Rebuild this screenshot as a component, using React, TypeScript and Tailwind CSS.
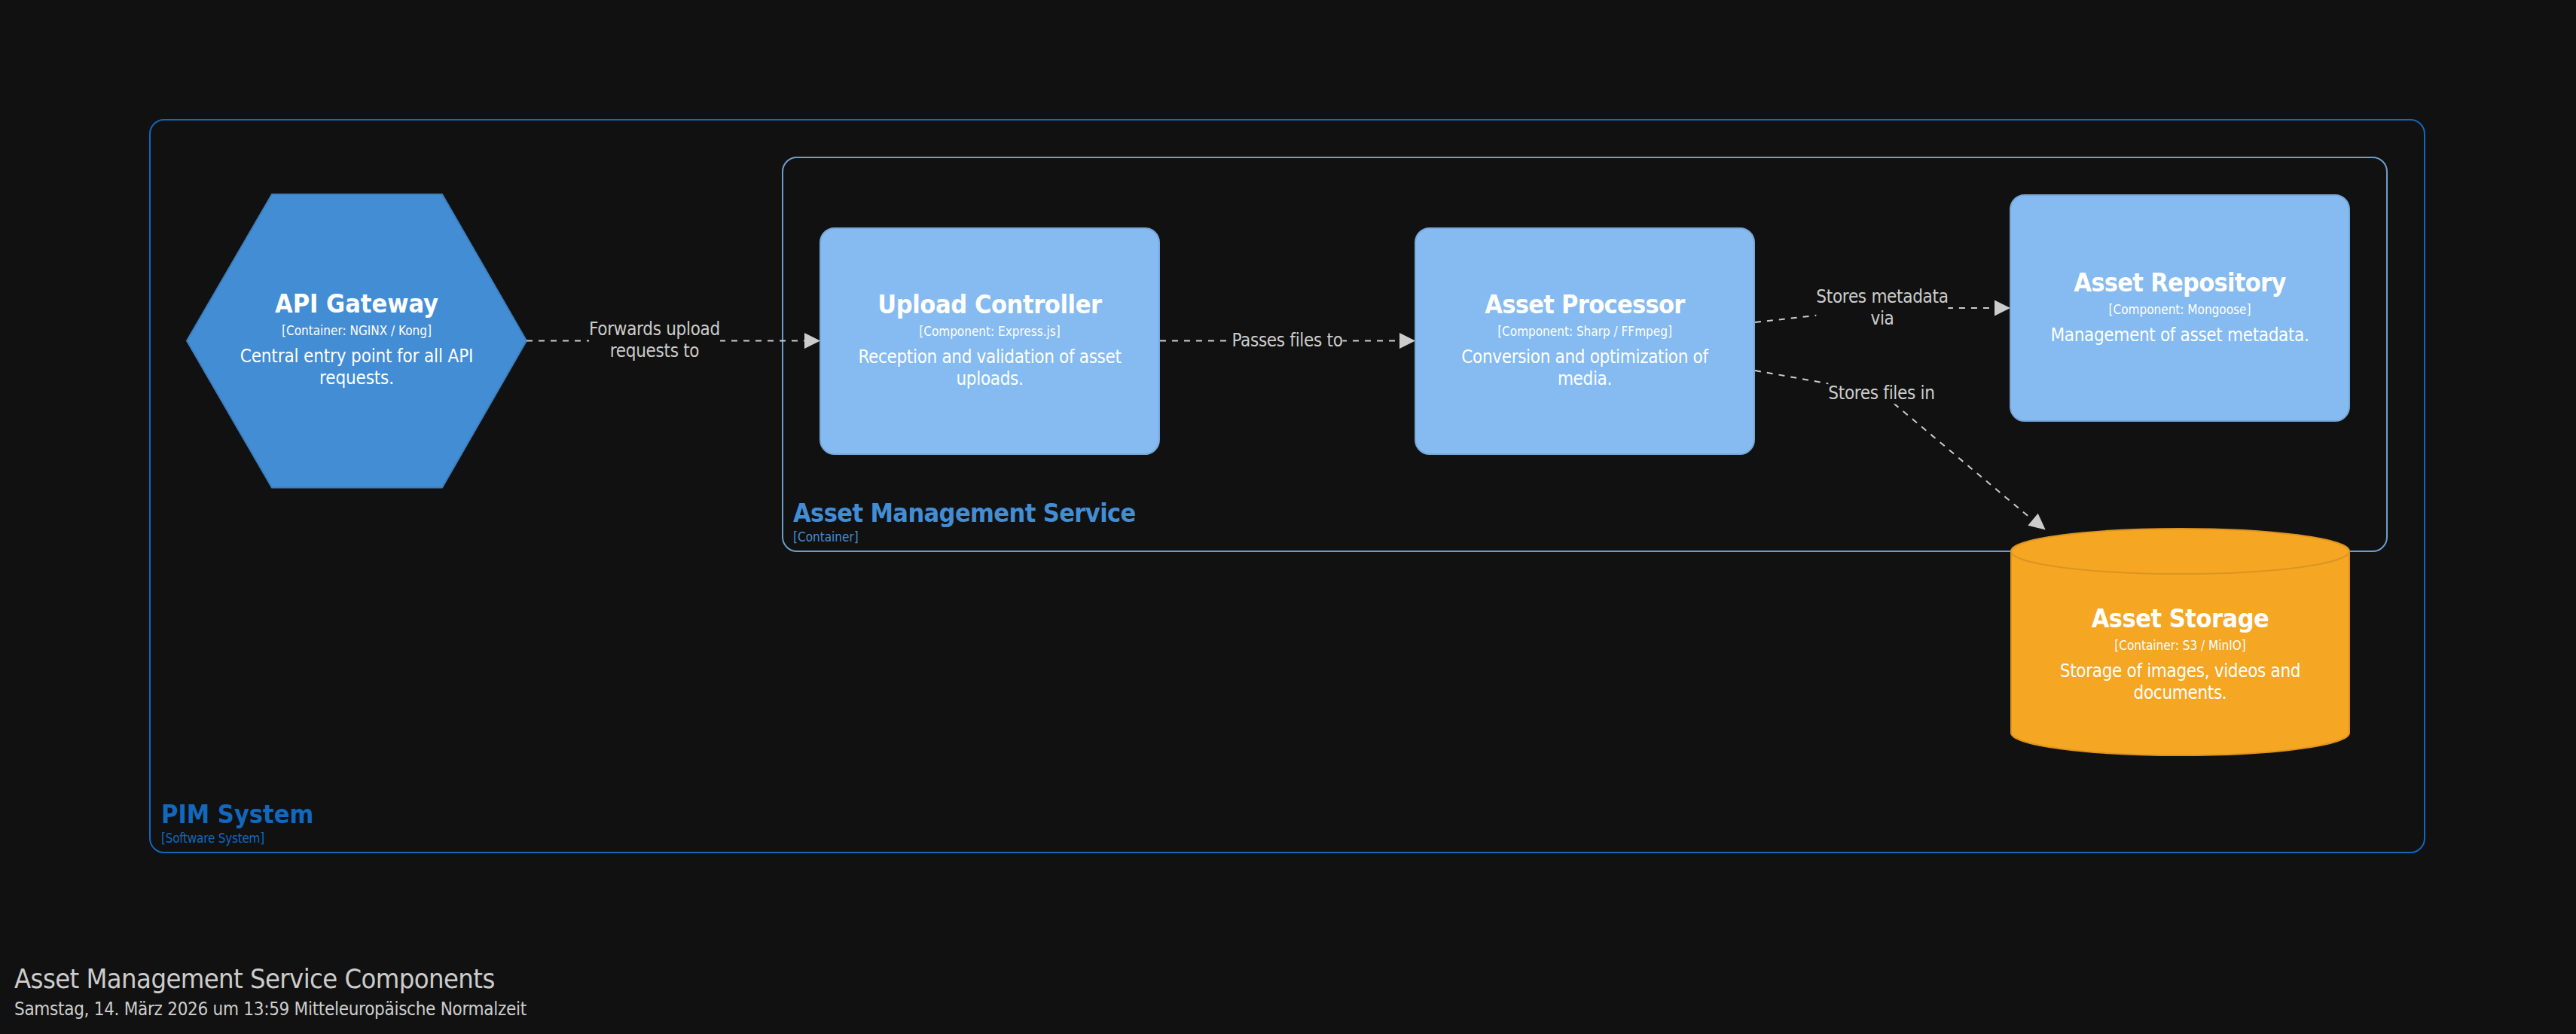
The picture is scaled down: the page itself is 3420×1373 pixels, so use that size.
const FONT = "font-['DejaVu_Sans_Condensed','DejaVu_Sans',sans-serif] [font-stretch:condensed]";

type NodeProps = { name: string; meta: string; desc: string[]; nameTrack?: string; descTrack?: string };

function NodeText({ name, meta, desc, nameTrack = "tracking-[-0.6px]", descTrack = "tracking-[-0.33px]" }: NodeProps) {
  return (
    <div className="flex flex-col items-center text-center text-white">
      <div className={`text-[34px] leading-[40px] font-bold whitespace-nowrap ${nameTrack}`}>{name}</div>
      <div className="text-[17px] leading-[20px] mt-[6px] whitespace-nowrap">{meta}</div>
      <div className={`text-[24px] leading-[29px] mt-[10px] ${descTrack}`}>
        {desc.map((d) => (
          <div key={d} className="whitespace-nowrap">{d}</div>
        ))}
      </div>
    </div>
  );
}

function Card({ className, ...rest }: NodeProps & { className: string }) {
  return (
    <div className={`absolute w-[452px] h-[302px] rounded-[20px] bg-[#85bbf0] border-2 border-[#78a8d8] flex items-center justify-center pb-[4px] ${className}`}>
      <NodeText {...rest} />
    </div>
  );
}

function EdgeLabel({ className, lines }: { className: string; lines: string[] }) {
  return (
    <div className={`absolute bg-[#111111] text-[#cccccc] text-[24px] leading-[29px] tracking-[-0.3px] text-center -translate-x-1/2 -translate-y-1/2 whitespace-nowrap ${className}`}>
      {lines.map((l) => (
        <div key={l}>{l}</div>
      ))}
    </div>
  );
}

export default function App() {
  return (
    <div className={`w-[3420px] h-[1373px] bg-[#111111] overflow-hidden flex flex-col ${FONT}`}>
      <div className="relative w-[3420px] h-[1240px] shrink-0">
        {/* software system boundary */}
        <div className="absolute left-[198px] top-[158px] w-[3022px] h-[975px] rounded-[20px] border-2 border-[#1168bd]">
          <div className="absolute left-[14px] bottom-[8px] text-[#1168bd]">
            <div className="text-[34px] leading-[40px] font-bold">PIM System</div>
            <div className="text-[17px] leading-[20px] mt-[2px] tracking-[-0.25px]">[Software System]</div>
          </div>
        </div>

        {/* container boundary */}
        <div className="absolute left-[1038px] top-[208px] w-[2132px] h-[525px] rounded-[20px] border-2 border-[#6f9dcb]">
          <div className="absolute left-[13px] bottom-[8px] text-[#438dd5]">
            <div className="text-[34px] leading-[40px] font-bold tracking-[-0.6px]">Asset Management Service</div>
            <div className="text-[17px] leading-[20px] mt-[2px]">[Container]</div>
          </div>
        </div>

        {/* shapes and edges */}
        <svg className="absolute inset-0" width="3420" height="1240" viewBox="0 0 3420 1240">
          <polygon points="361,258 587,258 699,452.5 587,647.5 361,647.5 248,452.5" fill="#438dd5" stroke="#3c7fc0" strokeWidth="2" />
          <path d="M2670 732 V973 A224.5 30 0 0 0 3119 973 V732 A224.5 30 0 0 0 2670 732 Z" fill="#f5a623" stroke="#dd951f" strokeWidth="2" />
          <path d="M2670 732 A224.5 30 0 0 0 3119 732" fill="none" stroke="#dd951f" strokeWidth="2" />
          <g stroke="#cccccc" strokeWidth="2" strokeDasharray="8 8" fill="none">
            <path d="M699 452.5 H1069" />
            <path d="M1540 452.5 H1859" />
            <path d="M2330 428 L2498 409 H2649" />
            <path d="M2330 492 L2498 522 L2697 689" />
          </g>
          <g fill="#cccccc">
            <polygon points="1068,442 1089,452.5 1068,463" />
            <polygon points="1858,442 1879,452.5 1858,463" />
            <polygon points="2648,398.5 2669,409 2648,419.5" />
            <polygon points="2715.7,703.5 2705.7,681.7 2692.3,697.7" />
          </g>
        </svg>

        <div className="absolute left-[248px] top-[258px] w-[451px] h-[390px] flex items-center justify-center pb-[6px]">
          <NodeText name="API Gateway" meta="[Container: NGINX / Kong]" desc={["Central entry point for all API", "requests."]} nameTrack="tracking-[0px]" descTrack="tracking-[-0.15px]" />
        </div>
        <Card className="left-[1088px] top-[302px]" name="Upload Controller" meta="[Component: Express.js]" desc={["Reception and validation of asset", "uploads."]} nameTrack="tracking-[-0.4px]" />
        <Card className="left-[1878px] top-[302px]" name="Asset Processor" meta="[Component: Sharp / FFmpeg]" desc={["Conversion and optimization of", "media."]} nameTrack="tracking-[-0.7px]" />
        <Card className="left-[2668px] top-[258px]" name="Asset Repository" meta="[Component: Mongoose]" desc={["Management of asset metadata."]} nameTrack="tracking-[-0.7px]" />
        <div className="absolute left-[2669px] top-[762px] w-[451px] h-[211px] flex items-center justify-center">
          <NodeText name="Asset Storage" meta="[Container: S3 / MinIO]" desc={["Storage of images, videos and", "documents."]} nameTrack="tracking-[-0.5px]" />
        </div>

        <EdgeLabel className="left-[869px] top-[452px]" lines={["Forwards upload", "requests to"]} />
        <EdgeLabel className="left-[1709px] top-[452px]" lines={["Passes files to"]} />
        <EdgeLabel className="left-[2499px] top-[409px]" lines={["Stores metadata", "via"]} />
        <EdgeLabel className="left-[2498px] top-[522px]" lines={["Stores files in"]} />
      </div>

      <div className="pl-[19px] pt-[38px] text-[#cccccc]">
        <div className="text-[36px] leading-[44px] tracking-[-0.56px] whitespace-nowrap">Asset Management Service Components</div>
        <div className="text-[24px] leading-[29px] mt-[4px] tracking-[-0.29px] whitespace-nowrap">Samstag, 14. März 2026 um 13:59 Mitteleuropäische Normalzeit</div>
      </div>
    </div>
  );
}
